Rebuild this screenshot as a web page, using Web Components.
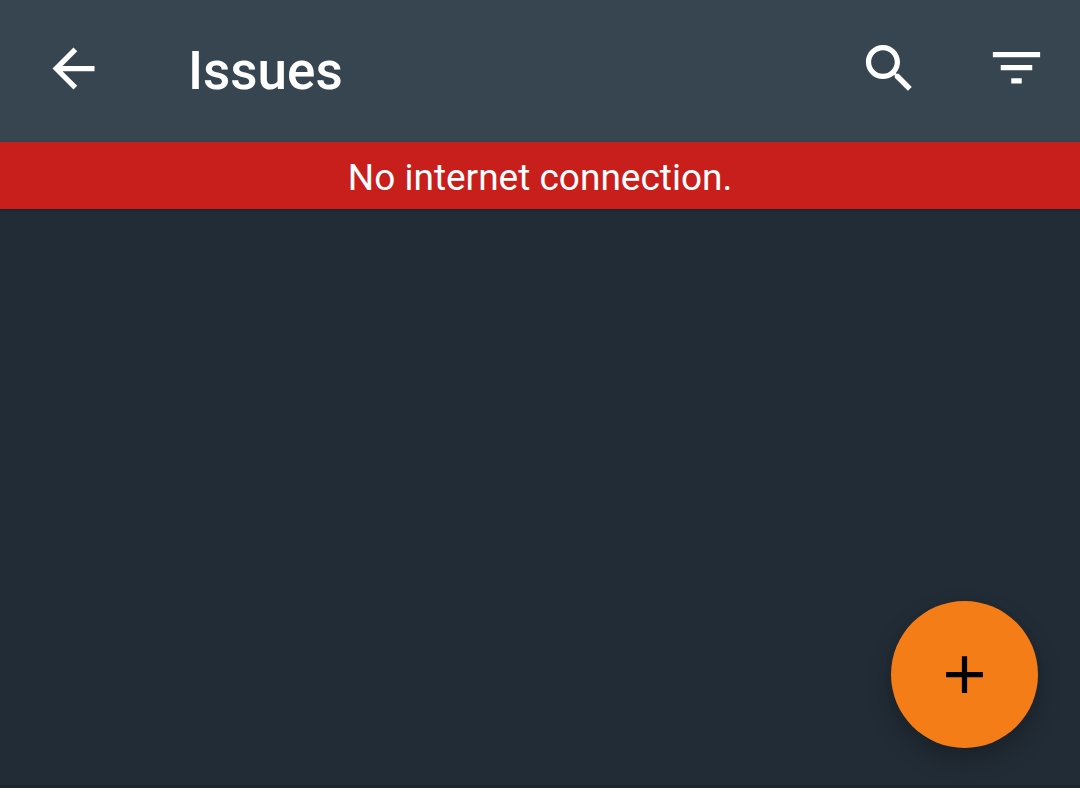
<!DOCTYPE html>
<html lang="en">
<head>
<meta charset="utf-8">
<meta name="viewport" content="width=device-width, initial-scale=1">
<title>Issues</title>
<style>
html, body { height: 100%; margin: 0; }
body { background: #222c36; color: #fff; font-family: Roboto, "Noto Sans", sans-serif; }
</style>
</head>
<body>
<issues-screen>
  <app-bar slot="bar" heading="Issues">
    <icon-button slot="start" icon="back" label="Back"></icon-button>
    <icon-button slot="end" icon="search" label="Search"></icon-button>
    <icon-button slot="end" icon="filter" label="Filter"></icon-button>
  </app-bar>
  <status-banner slot="banner">No internet connection.</status-banner>
  <fab-button slot="fab" label="Add issue"></fab-button>
</issues-screen>
<script>
const define = (name, html, setup) => customElements.define(name, class extends HTMLElement {
  constructor() {
    super();
    this.attachShadow({ mode: "open" }).innerHTML = html;
  }
  connectedCallback() { if (setup) setup(this, this.shadowRoot); }
});

const ICONS = {
  back: "M20 11H7.83l5.59-5.59L12 4l-8 8 8 8 1.41-1.41L7.83 13H20v-2z",
  search: "M15.5 14h-.79l-.28-.27C15.41 12.59 16 11.11 16 9.5 16 5.91 13.09 3 9.5 3S3 5.91 3 9.5 5.91 16 9.5 16c1.61 0 3.09-.59 4.23-1.57l.27.28v.79l5 4.99L20.49 19l-4.99-5zm-6 0C7.01 14 5 11.99 5 9.5S7.01 5 9.5 5 14 7.01 14 9.5 11.99 14 9.5 14z",
  filter: "M10 17.7h4v-2h-4v2zM3 5.7v2h18v-2H3zm3 7h12v-2H6v2z"
};

define("icon-button", `
  <style>
    :host { display: block; flex: none; }
    button { display: block; margin: 0; padding: 0; border: 0; background: none; color: inherit; cursor: pointer; }
    svg { display: block; width: 63px; height: 63px; fill: currentColor; }
  </style>
  <button type="button"><svg viewBox="0 0 24 24" aria-hidden="true"><path/></svg></button>`,
  (host, root) => {
    root.querySelector("button").setAttribute("aria-label", host.getAttribute("label"));
    root.querySelector("path").setAttribute("d", ICONS[host.getAttribute("icon")]);
  });

define("app-bar", `
  <style>
    :host { display: block; background: #374551; }
    header { display: flex; align-items: center; padding: 34px 32px 39px 42px; }
    h1 { flex: 1; margin: 0; padding: 6px 0 0 83px; font-size: 53px; line-height: 63px; font-weight: 500; }
    .actions { display: flex; gap: 64px; }
  </style>
  <header><slot name="start"></slot><h1></h1><div class="actions"><slot name="end"></slot></div></header>`,
  (host, root) => { root.querySelector("h1").textContent = host.getAttribute("heading"); });

define("status-banner", `
  <style>
    :host { display: block; background: #c81e1c; text-align: center; font-size: 37px; line-height: 43px; padding: 14px 16px 10px; box-shadow: 0 1px 3px rgba(0,0,0,.25); }
  </style>
  <div role="status"><slot></slot></div>`);

define("fab-button", `
  <style>
    :host { display: block; }
    button { display: flex; align-items: center; justify-content: center; width: 147px; height: 147px; padding: 0; border: 0; border-radius: 50%; background: #f57d17; color: #000; cursor: pointer; box-shadow: 0 12px 24px rgba(0,0,0,.22), 0 2px 8px rgba(0,0,0,.06); }
    svg { width: 63px; height: 63px; fill: currentColor; }
  </style>
  <button type="button"><svg viewBox="0 0 24 24" aria-hidden="true"><path d="M19 13h-6v6h-2v-6H5v-2h6V5h2v6h6v2z"/></svg></button>`,
  (host, root) => root.querySelector("button").setAttribute("aria-label", host.getAttribute("label")));

define("issues-screen", `
  <style>
    :host { display: flex; flex-direction: column; min-height: 100%; box-sizing: border-box; border-bottom: 3px solid #1e2730; }
    main { flex: 1; display: flex; align-items: flex-end; justify-content: flex-end; padding: 42px 42px 37px; }
  </style>
  <slot name="bar"></slot><slot name="banner"></slot>
  <main><slot name="fab"></slot></main>`);
</script>
</body>
</html>
